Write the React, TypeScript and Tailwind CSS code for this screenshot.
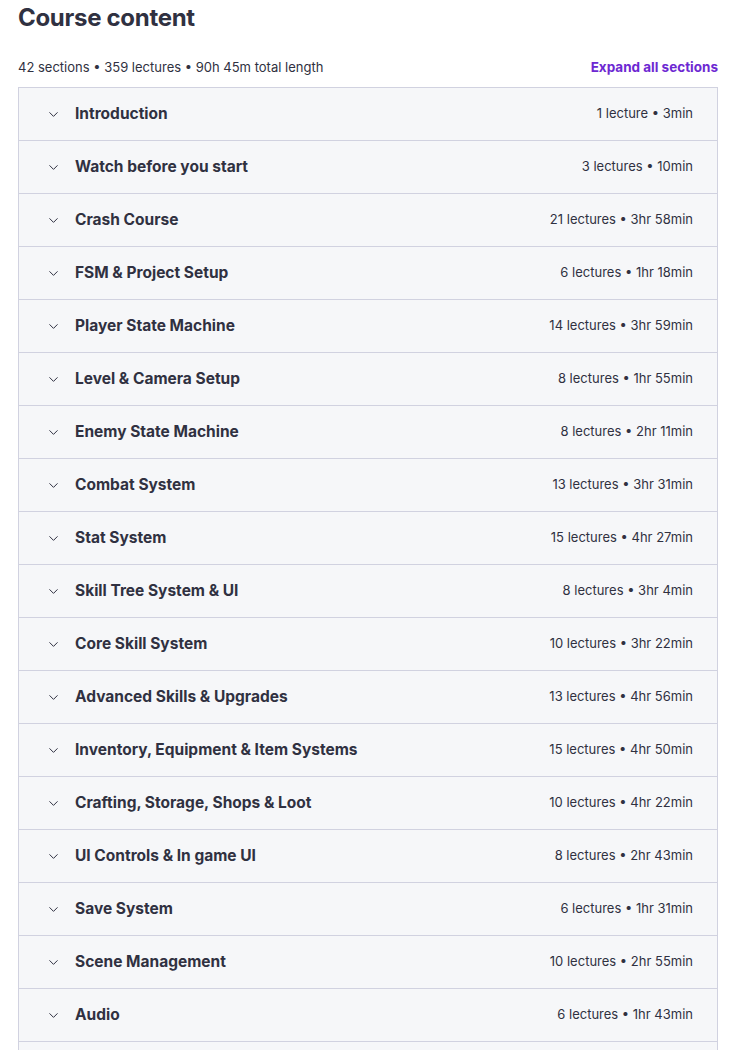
import React from "react";
import { ChevronDown } from "lucide-react";

const sections = [
  { title: "Introduction", meta: "1 lecture • 3min" },
  { title: "Watch before you start", meta: "3 lectures • 10min" },
  { title: "Crash Course", meta: "21 lectures • 3hr 58min" },
  { title: "FSM & Project Setup", meta: "6 lectures • 1hr 18min" },
  { title: "Player State Machine", meta: "14 lectures • 3hr 59min" },
  { title: "Level & Camera Setup", meta: "8 lectures • 1hr 55min" },
  { title: "Enemy State Machine", meta: "8 lectures • 2hr 11min" },
  { title: "Combat System", meta: "13 lectures • 3hr 31min" },
  { title: "Stat System", meta: "15 lectures • 4hr 27min" },
  { title: "Skill Tree System & UI", meta: "8 lectures • 3hr 4min" },
  { title: "Core Skill System", meta: "10 lectures • 3hr 22min" },
  { title: "Advanced Skills & Upgrades", meta: "13 lectures • 4hr 56min" },
  { title: "Inventory, Equipment & Item Systems", meta: "15 lectures • 4hr 50min" },
  { title: "Crafting, Storage, Shops & Loot", meta: "10 lectures • 4hr 22min" },
  { title: "UI Controls & In game UI", meta: "8 lectures • 2hr 43min" },
  { title: "Save System", meta: "6 lectures • 1hr 31min" },
  { title: "Scene Management", meta: "10 lectures • 2hr 55min" },
  { title: "Audio", meta: "6 lectures • 1hr 43min" },
];

export default function App() {
  return (
    <div className="w-[736px] bg-white px-[18px] pt-[2px] text-[#303141] font-['Inter',sans-serif]">
      <h2 className="text-[24px] font-bold leading-[32px] tracking-[-0.3px]">Course content</h2>

      <div className="mt-[23px] mb-[10px] flex items-center justify-between">
        <span className="text-[13px] leading-[20px]">42 sections • 359 lectures • 90h 45m total length</span>
        <button className="text-[13.5px] font-bold leading-[20px] text-[#6d28d2]">Expand all sections</button>
      </div>

      {/* section list */}
      <div className="border border-b-0 border-[#d1d2e0]">
        {sections.map((s) => (
          <div
            key={s.title}
            className="flex h-[53px] items-center justify-between border-b border-[#d1d2e0] bg-[#f6f7f9] pl-[27px] pr-[24px]"
          >
            <div className="flex items-center gap-[14px]">
              <ChevronDown size={15} strokeWidth={1.6} className="text-[#303141]" />
              <span className="text-[15.5px] font-bold">{s.title}</span>
            </div>
            <span className="text-[13px]">{s.meta}</span>
          </div>
        ))}
        {/* next section, below the fold */}
        <div className="h-[53px] border-b border-[#d1d2e0] bg-[#f6f7f9]" />
      </div>
    </div>
  );
}
